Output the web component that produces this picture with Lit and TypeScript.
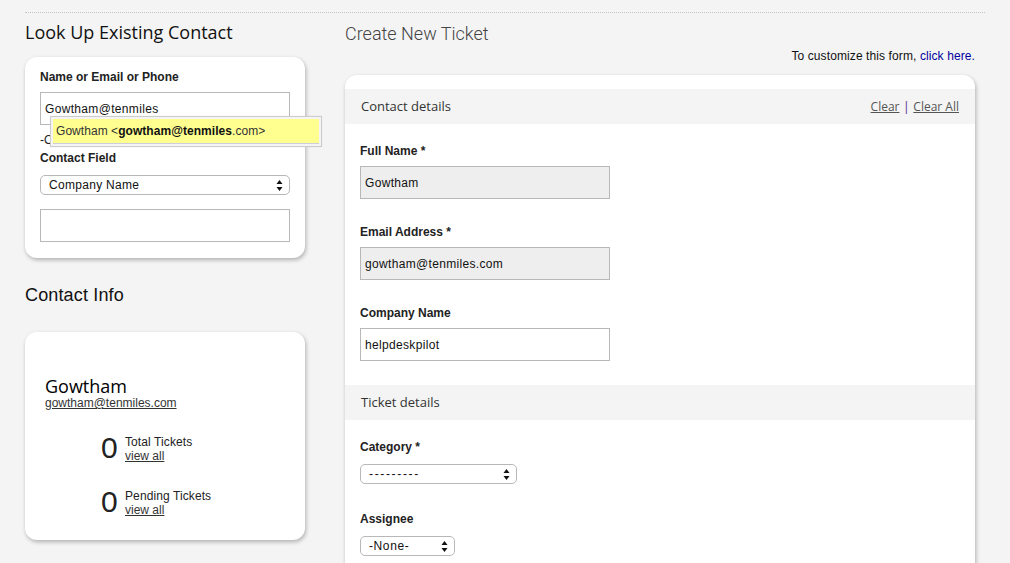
import { LitElement, html, css } from "lit";
import { customElement } from "lit/decorators.js";

const arrows = html`<svg class="arrows" width="7" height="11" viewBox="0 0 7 11"><path d="M3.5 0 L6.5 4 H.5 Z M3.5 11 L.5 7 H6.5 Z" fill="#111"/></svg>`;

@customElement("app-root")
export class AppRoot extends LitElement {
  static styles = css`
    :host { display: block; height: 563px; overflow: hidden; background: #f4f4f4; font-family: "Liberation Sans", Arial, sans-serif; font-size: 12px; color: #222; }
    * { box-sizing: border-box; }
    .page { margin: 0 25px; padding-top: 12px; width: 960px; }
    .rule { border-top: 1px dotted #c4c4c4; height: 1px; }
    .cols { display: flex; align-items: flex-start; gap: 40px; }
    .left { width: 280px; flex: none; position: relative; }
    .right { width: 630px; flex: none; }
    h2 { margin: 0; font-weight: 400; font-size: 18px; line-height: 24px; color: #111; }
    .os { font-family: "Open Sans", sans-serif; }
    .lookup-h { margin-top: 7px; }
    .card { background: #fff; border-radius: 12px; box-shadow: 1px 2px 4px rgba(0,0,0,.28); }
    .lookup { margin-top: 13px; height: 201px; padding: 13px 15px 0; position: relative; }
    label, .lbl { display: block; font-weight: 700; font-size: 12px; line-height: 14px; color: #222; }
    .input { display: flex; align-items: center; height: 33px; width: 250px; border: 1px solid #b8b8b8; background: #fff; padding: 0 4px; font-size: 12px; color: #111; letter-spacing: .33px; }
    .lookup .input.first { margin-top: 8px; }
    .or { line-height: 14px; margin-top: 8px; color: #222; }
    .lookup .lbl.cf { margin-top: 4px; }
    .select { display: flex; align-items: center; justify-content: space-between; height: 20px; border: 1px solid #b8b8b8; border-radius: 5px; background: #fff; padding: 0 6px 0 8px; font-size: 12px; color: #111; letter-spacing: .3px; }
    .lookup .select { width: 250px; margin-top: 10px; }
    .lookup .input.last { margin-top: 14px; }
    .suggest { position: absolute; left: 25px; top: 59px; width: 272px; height: 31px; border: 1px solid #ccc; background: #f4f4f4; padding: 2px; box-shadow: 0 0 1px rgba(0,0,0,.1); }
    .suggest div { height: 25px; line-height: 24px; background: #ffff90; border-bottom: 1px solid #ccd; padding-left: 3px; font-size: 12px; color: #333; letter-spacing: .05px; }
    .suggest b { color: #111; }
    .info-h { margin-top: 25px; letter-spacing: .15px; }
    .info { margin-top: 25px; height: 208px; padding: 43px 20px 0; }
    .name { font-family: "Open Sans", sans-serif; font-size: 18px; line-height: 22px; color: #000; }
    a { color: #333; text-decoration: underline; }
    .mail { display: block; line-height: 13px; margin-top: 0; font-size: 12px; }
    .stat { display: flex; align-items: center; padding-left: 56px; gap: 8px; height: 28px; }
    .stats { margin-top: 25px; display: flex; flex-direction: column; gap: 26px; }
    .num { font-size: 30px; line-height: 28px; width: 16px; color: #222; margin-top: -2px; }
    .stat-t { line-height: 14px; color: #222; letter-spacing: .1px; }
    .stat-t a { display: block; letter-spacing: 0; }
    .create-h { margin-top: 9px; color: #444; font-family: Roboto, sans-serif; font-weight: 300; }
    .customize { text-align: right; line-height: 14px; margin-top: 3px; color: #111; letter-spacing: .1px; }
    .customize a { color: #0000a0; text-decoration: none; }
    .form { margin-top: 12px; height: 600px; padding-top: 14px; }
    .bar { display: flex; justify-content: space-between; align-items: center; height: 35px; background: #f4f4f4; padding: 0 16px 2px; font-family: "Open Sans", sans-serif; font-size: 13px; color: #333; }
    .links { font-size: 12px; color: #555; padding-top: 2px; }
    .links a { color: #555; }
    .links span { color: #4b2a8a; margin: 0 .5px; }
    .field { padding: 0 15px; }
    .form .input { height: 33px; }
    .ro { background: #eee; }
    .f1 { margin-top: 20px; }
    .f2 { margin-top: 26px; }
    .f3 { margin-top: 28px; }
    .fld-in { margin-top: 8px; }
    .bar2 { margin-top: 24px; }
    .sel-l { margin-top: 10px; }
    .w1 { width: 157px; }
    .w2 { width: 95px; }
    .dash { letter-spacing: 1.65px; }
    .none { letter-spacing: .6px; }
  `;

  render() {
    return html`<div class="page">
      <div class="rule"></div>
      <div class="cols">
        <div class="left">
          <h2 class="os lookup-h">Look Up Existing Contact</h2>
          <div class="card lookup">
            <label>Name or Email or Phone</label>
            <div class="input first">Gowtham@tenmiles</div>
            <div class="or">-OR-</div>
            <div class="lbl cf">Contact Field</div>
            <div class="select"><span>Company Name</span>${arrows}</div>
            <div class="input last"></div>
            <div class="suggest"><div>Gowtham &lt;<b>gowtham@tenmiles</b>.com&gt;</div></div>
          </div>
          <h2 class="info-h">Contact Info</h2>
          <div class="card info">
            <div class="name">Gowtham</div>
            <a class="mail" href="#">gowtham@tenmiles.com</a>
            <div class="stats">
              <div class="stat"><div class="num">0</div><div class="stat-t">Total Tickets<a href="#">view all</a></div></div>
              <div class="stat"><div class="num">0</div><div class="stat-t">Pending Tickets<a href="#">view all</a></div></div>
            </div>
          </div>
        </div>
        <div class="right">
          <h2 class="create-h">Create New Ticket</h2>
          <div class="customize">To customize this form, <a href="#">click here.</a></div>
          <div class="card form">
            <div class="bar"><span>Contact details</span><span class="links"><a href="#">Clear</a> <span>|</span> <a href="#">Clear All</a></span></div>
            <div class="field f1"><label>Full Name *</label><div class="input ro fld-in">Gowtham</div></div>
            <div class="field f2"><label>Email Address *</label><div class="input ro fld-in">gowtham@tenmiles.com</div></div>
            <div class="field f2"><label>Company Name</label><div class="input fld-in">helpdeskpilot</div></div>
            <div class="bar bar2"><span>Ticket details</span></div>
            <div class="field f1"><label>Category *</label><div class="select w1 sel-l"><span class="dash">---------</span>${arrows}</div></div>
            <div class="field f3"><label>Assignee</label><div class="select w2 sel-l"><span class="none">-None-</span>${arrows}</div></div>
          </div>
        </div>
      </div>
    </div>`;
  }
}
